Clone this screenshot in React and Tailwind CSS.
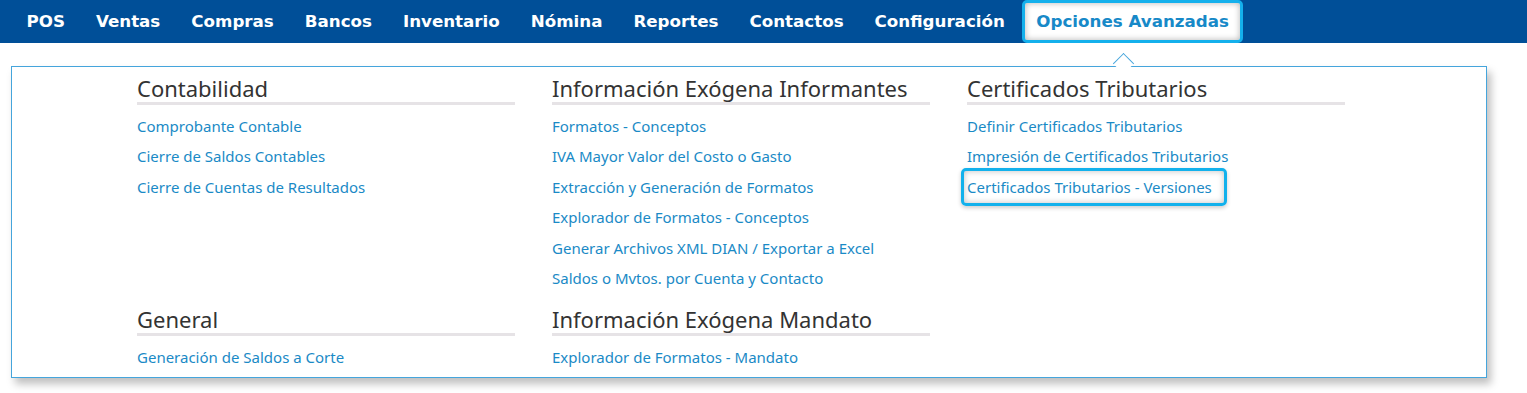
const nav = ["POS", "Ventas", "Compras", "Bancos", "Inventario", "Nómina", "Reportes", "Contactos", "Configuración"];

const rowOne = [
  {
    title: "Contabilidad",
    links: ["Comprobante Contable", "Cierre de Saldos Contables", "Cierre de Cuentas de Resultados"],
  },
  {
    title: "Información Exógena Informantes",
    links: [
      "Formatos - Conceptos",
      "IVA Mayor Valor del Costo o Gasto",
      "Extracción y Generación de Formatos",
      "Explorador de Formatos - Conceptos",
      "Generar Archivos XML DIAN / Exportar a Excel",
      "Saldos o Mvtos. por Cuenta y Contacto",
    ],
  },
  {
    title: "Certificados Tributarios",
    links: ["Definir Certificados Tributarios", "Impresión de Certificados Tributarios", "Certificados Tributarios - Versiones"],
    active: 2,
  },
];

const rowTwo = [
  { title: "General", links: ["Generación de Saldos a Corte"] },
  { title: "Información Exógena Mandato", links: ["Explorador de Formatos - Mandato"] },
];

function Section({ title, links, active }) {
  return (
    <div className="w-[378px]">
      <h3 className="h-[38px] border-b-[3px] border-[#e6e3e6] pt-[9px] text-[22px] leading-[24px] text-[#333]">{title}</h3>
      <ul className="pt-[10px]">
        {links.map((l, i) => (
          <li key={l} className="h-[30.4px] text-[15px]">
            <a
              className={
                i === active
                  ? "-mt-[9px] -ml-[6px] inline-flex h-[38px] items-center rounded-[5px] border-[3px] border-[#12b1ec] pr-[12px] pl-[3px] leading-[22px] text-[#1a8ac6] shadow-[inset_0_0_6px_rgba(0,0,0,0.25),0_2px_4px_rgba(0,0,0,0.2)]"
                  : "leading-[22px] text-[#1a8ac6]"
              }
            >
              {l}
            </a>
          </li>
        ))}
      </ul>
    </div>
  );
}

export default function App() {
  return (
    <div className="h-[393px] w-[1527px] bg-white" style={{ fontFamily: '"Noto Sans", sans-serif' }}>
      <nav className="flex h-[43px] items-stretch bg-[#004f98] pl-[11px]" style={{ fontFamily: '"DejaVu Sans", sans-serif' }}>
        {nav.map((n) => (
          <span key={n} className="flex items-center px-[15.5px] text-[16.7px] font-bold text-white">
            {n}
          </span>
        ))}
        <span className="ml-[2px] flex items-center rounded-[5px] border-[3px] border-[#14b0ec] bg-white px-[11px] text-[16.7px] font-bold text-[#1789c8] shadow-[inset_0_0_6px_rgba(0,0,0,0.3)]">
          Opciones Avanzadas
        </span>
      </nav>
      <div className="relative mt-[23px] ml-[11px] h-[312px] w-[1476px] border border-[#45a5dc] bg-white shadow-[4px_6px_8px_rgba(0,0,0,0.25)]">
        <div className="absolute -top-[11px] left-[1104px] h-[15px] w-[15px] rotate-45 border-t border-l border-[#45a5dc] bg-white" />
        <div className="flex gap-[37px] pl-[125px]">
          {rowOne.map((s) => (
            <Section key={s.title} {...s} />
          ))}
        </div>
        <div className="mt-[1px] flex gap-[37px] pl-[125px]">
          {rowTwo.map((s) => (
            <Section key={s.title} {...s} />
          ))}
        </div>
      </div>
    </div>
  );
}
